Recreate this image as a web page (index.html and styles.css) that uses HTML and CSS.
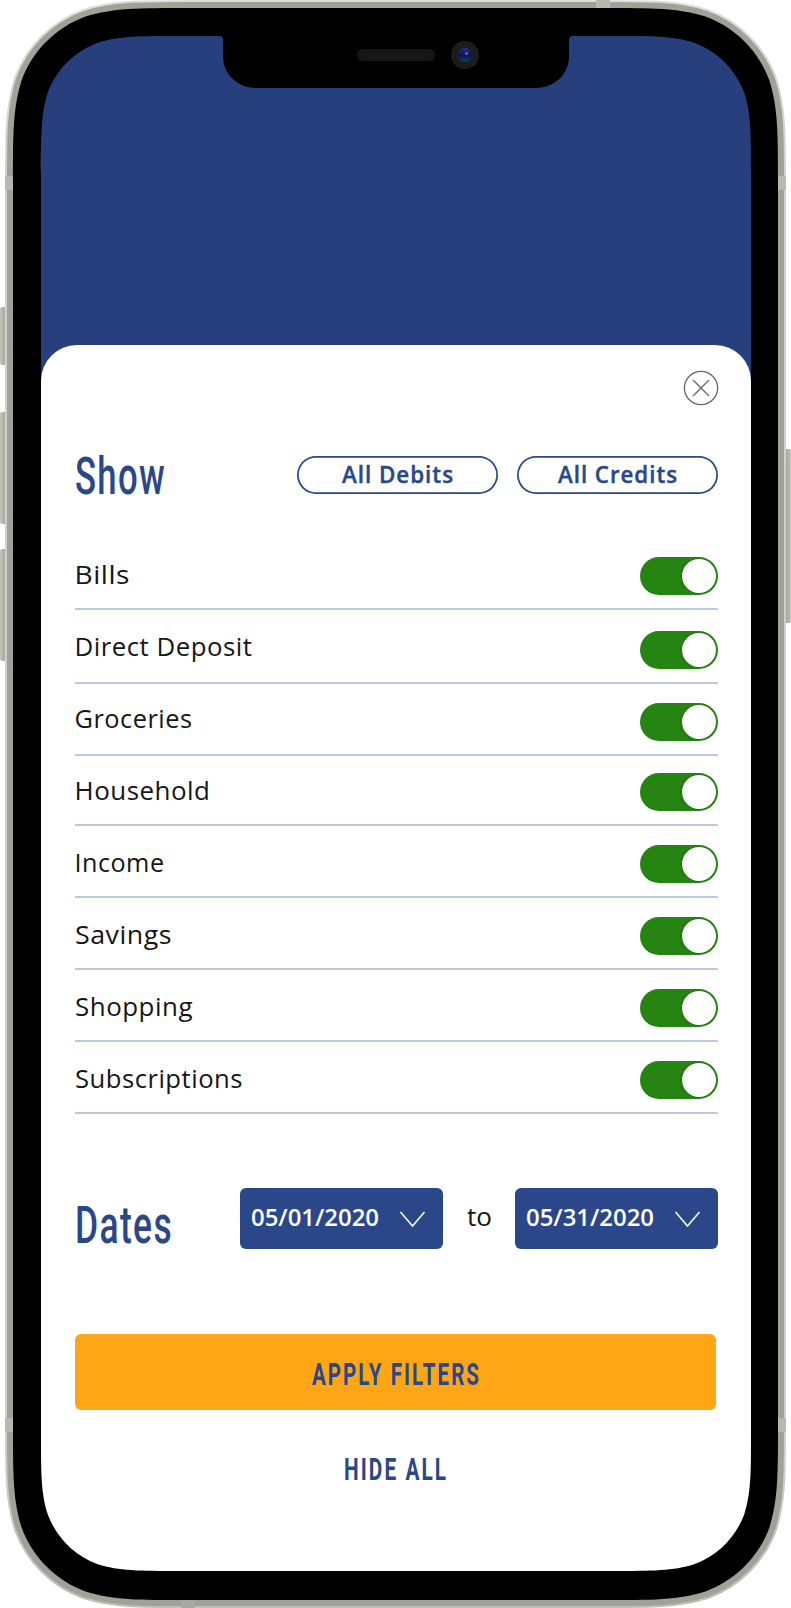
FILE: index.html
```html
<!DOCTYPE html>
<html lang="en">
<head>
<meta charset="utf-8">
<title>Transaction filters</title>
<link rel="stylesheet" href="styles.css">
</head>
<body>
<main class="device">
  <section class="screen">
    <div class="sheet">
      <div class="close-row">
        <svg class="close" viewBox="0 0 36 36" role="img" aria-label="Close"><circle cx="18" cy="18" r="16.6"/><path d="M10 10L26 26M26 10L10 26"/></svg>
      </div>
      <div class="show-row">
        <svg class="heading"><text x="0" y="38" textLength="91" lengthAdjust="spacingAndGlyphs">Show</text></svg>
        <div class="pills">
          <button class="pill"><svg><text x="45" y="26.500" textLength="112" lengthAdjust="spacingAndGlyphs">All Debits</text></svg></button>
          <button class="pill"><svg><text x="41" y="26.500" textLength="120" lengthAdjust="spacingAndGlyphs">All Credits</text></svg></button>
        </div>
      </div>
      <ul class="list">
        <li class="row"><svg class="label"><text x="-.5" y="46" textLength="55.500" lengthAdjust="spacingAndGlyphs">Bills</text></svg><span class="toggle"></span></li>
        <li class="row row-tall"><svg class="label"><text x="-.5" y="46" textLength="178" lengthAdjust="spacingAndGlyphs">Direct Deposit</text></svg><span class="toggle"></span></li>
        <li class="row"><svg class="label"><text x="-.5" y="44" textLength="118" lengthAdjust="spacingAndGlyphs">Groceries</text></svg><span class="toggle"></span></li>
        <li class="row row-short"><svg class="label"><text x="-.5" y="44" textLength="136" lengthAdjust="spacingAndGlyphs">Household</text></svg><span class="toggle"></span></li>
        <li class="row"><svg class="label"><text x="-.5" y="46" textLength="90" lengthAdjust="spacingAndGlyphs">Income</text></svg><span class="toggle"></span></li>
        <li class="row"><svg class="label"><text x="0" y="46" textLength="97" lengthAdjust="spacingAndGlyphs">Savings</text></svg><span class="toggle"></span></li>
        <li class="row"><svg class="label"><text x="0" y="46" textLength="118" lengthAdjust="spacingAndGlyphs">Shopping</text></svg><span class="toggle"></span></li>
        <li class="row"><svg class="label"><text x="0" y="46" textLength="168" lengthAdjust="spacingAndGlyphs">Subscriptions</text></svg><span class="toggle"></span></li>
      </ul>
      <div class="dates-row">
        <svg class="heading dates"><text x="0" y="54.500" textLength="98" lengthAdjust="spacingAndGlyphs">Dates</text></svg>
        <button class="date"><svg><text x="11" y="38" textLength="128" lengthAdjust="spacingAndGlyphs">05/01/2020</text><path d="M160.500 24L172.500 38L184.500 24"/></svg></button>
        <svg class="to"><text x="24" y="38" textLength="25" lengthAdjust="spacingAndGlyphs">to</text></svg>
        <button class="date"><svg><text x="11" y="38" textLength="128" lengthAdjust="spacingAndGlyphs">05/31/2020</text><path d="M160.500 24L172.500 38L184.500 24"/></svg></button>
      </div>
      <button class="action apply"><svg><text x="237" y="51" textLength="169" lengthAdjust="spacingAndGlyphs">APPLY FILTERS</text></svg></button>
      <button class="action hide"><svg><text x="269" y="51" textLength="104" lengthAdjust="spacingAndGlyphs">HIDE ALL</text></svg></button>
    </div>
  </section>
  <svg class="frame" viewBox="0 0 791 1608" aria-hidden="true">
    <defs>
      <linearGradient id="rim" x1="0" y1="0" x2="0" y2="1"><stop offset="0" stop-color="#dededc"/><stop offset=".1" stop-color="#d1d1cd"/><stop offset=".9" stop-color="#cfcfcb"/><stop offset="1" stop-color="#bfbfba"/></linearGradient>
      <linearGradient id="key" x1="0" y1="0" x2="1" y2="0"><stop offset="0" stop-color="#c3c4bc"/><stop offset=".5" stop-color="#aeb0a6"/><stop offset="1" stop-color="#96988d"/></linearGradient>
      <linearGradient id="key-r" x1="0" y1="0" x2="1" y2="0"><stop offset="0" stop-color="#96988d"/><stop offset=".5" stop-color="#aeb0a6"/><stop offset="1" stop-color="#c3c4bc"/></linearGradient>
      <linearGradient id="lens" x1="0" y1="0" x2="0" y2="1"><stop offset="0" stop-color="#2c2a9c"/><stop offset=".5" stop-color="#10104f"/><stop offset=".75" stop-color="#08305c"/><stop offset="1" stop-color="#064467"/></linearGradient>
      <path id="body" d="M13 183.800C13 133.200 13 107.900 21.600 80.600C32.400 50.900 55.900 27.400 85.600 16.600C112.900 8 138.200 8 188.800 8H602.200C652.800 8 678.100 8 705.400 16.600C735.100 27.400 758.600 50.900 769.400 80.600C778 107.900 778 133.200 778 183.800V1424.200C778 1474.800 778 1500.100 769.400 1527.400C758.600 1557.100 735.100 1580.600 705.400 1591.400C678.100 1600 652.800 1600 602.200 1600H188.800C138.200 1600 112.900 1600 85.600 1591.400C55.900 1580.600 32.400 1557.100 21.600 1527.400C13 1500.100 13 1474.800 13 1424.200Z"/>
    </defs>
    <g fill="url(#key)"><rect x="0" y="307" width="8" height="58" rx="2"/><rect x="0" y="412" width="8" height="112" rx="2"/><rect x="0" y="549" width="8" height="112" rx="2"/></g>
    <rect x="784" y="449" width="7" height="174" rx="2" fill="url(#key-r)"/>
    <use href="#body" fill="none" stroke="url(#rim)" stroke-width="16"/>
    <use href="#body" fill="none" stroke="#a0a298" stroke-width="12"/>
    <g fill="#b6b8b1"><rect x="5" y="176" width="8" height="14"/><rect x="778" y="176" width="8" height="14"/><rect x="596" y="0" width="14" height="8"/><rect x="5" y="1418" width="8" height="14"/><rect x="778" y="1418" width="8" height="14"/><rect x="181" y="1600" width="14" height="8" fill="#a7a9a1"/></g>
    <path fill-rule="evenodd" d="M13 183.800C13 133.200 13 107.900 21.600 80.600C32.400 50.900 55.900 27.400 85.600 16.600C112.900 8 138.200 8 188.800 8H602.200C652.800 8 678.100 8 705.400 16.600C735.100 27.400 758.600 50.900 769.400 80.600C778 107.900 778 133.200 778 183.800V1424.200C778 1474.800 778 1500.100 769.400 1527.400C758.600 1557.100 735.100 1580.600 705.400 1591.400C678.100 1600 652.800 1600 602.200 1600H188.800C138.200 1600 112.900 1600 85.600 1591.400C55.900 1580.600 32.400 1557.100 21.600 1527.400C13 1500.100 13 1474.800 13 1424.200ZM41 173.600C41 134 41 114.200 47.700 92.800C56.200 69.600 74.600 51.200 97.800 42.700C119.200 36 139 36 178.600 36H613.400C653 36 672.800 36 694.200 42.700C717.400 51.200 735.800 69.600 744.300 92.800C751 114.200 751 134 751 173.600V1433.400C751 1473 751 1492.800 744.300 1514.200C735.800 1537.400 717.400 1555.800 694.200 1564.300C672.800 1571 653 1571 613.400 1571H178.600C139 1571 119.200 1571 97.800 1564.300C74.600 1555.800 56.200 1537.400 47.700 1514.200C41 1492.800 41 1473 41 1433.400Z"/>
    <path d="M219 36Q223 36 223 40V56C223 75 238 88 257 88H535C554 88 569 75 569 56V40Q569 36 573 36V30H219Z"/>
    <rect x="357" y="49" width="78" height="12" rx="6" fill="#161616"/>
    <circle cx="465" cy="55" r="14" fill="#1c1c1d"/>
    <circle cx="465" cy="55" r="7" fill="url(#lens)"/>
    <circle cx="466.500" cy="53.500" r="1.800" fill="#5a50c4"/>
  </svg>
</main>
</body>
</html>
```
FILE: styles.css
```css
* { box-sizing: border-box; }
body { margin: 0; background: #fff; font-family: "Open Sans", "Noto Sans", sans-serif; }
svg { display: block; overflow: visible; }
button { display: block; padding: 0; border: 0; background: none; }
button svg { width: 100%; height: 100%; }

.device { position: relative; width: 791px; height: 1608px; padding: 36px 40px 37px 41px; overflow: hidden; }
.frame { position: absolute; inset: 0; width: 791px; height: 1608px; pointer-events: none; }
.screen { height: 1535px; padding-top: 308.5px; background: #273f7c; border-radius: 60px; overflow: hidden; }
.sheet { height: 1226.5px; padding: 25.500px 33px 0 34px; background: #fff; border-radius: 36px 36px 0 0; }

.close-row { display: flex; justify-content: flex-end; height: 86.400px; }
.close { width: 36px; height: 36px; margin-right: -1px; fill: none; stroke: #666; stroke-width: 1.3; }

.show-row { display: flex; justify-content: space-between; height: 81.600px; }
.heading { width: 110px; height: 60px; font: 500 51px Roboto, sans-serif; letter-spacing: 2px; fill: #2a478a; }
.pills { display: flex; gap: 19px; }
.pill { width: 201px; height: 38px; border-radius: 19px; box-shadow: inset 0 0 0 1.700px #2a478a; font: 600 22.500px "Open Sans", sans-serif; letter-spacing: 1px; fill: #2a478a; stroke: #2a478a; stroke-width: .4; }

.list { margin: 0; padding: 0; list-style: none; }
.row { display: flex; justify-content: space-between; align-items: flex-end; height: 72px; border-bottom: 2px solid #bcc9e2; }
.row-tall { height: 74px; }
.row-short { height: 70px; }
.label { width: 400px; height: 100%; font-size: 26.200px; letter-spacing: .5px; fill: #161616; }
.toggle { display: flex; justify-content: flex-end; width: 78px; height: 38px; margin-bottom: 13px; padding: 2px; border-radius: 19px; background: #268512; }
.toggle::before { content: ""; width: 34px; height: 34px; border-radius: 50%; background: #fff; box-shadow: -1px 0 3px rgba(0, 0, 0, .2); }

.dates-row { display: flex; margin-top: 74.500px; height: 61px; }
.dates { width: 165px; }
.date { width: 203px; height: 60.500px; border-radius: 6px; background: #2a478a; font: 600 22.500px "Open Sans", sans-serif; fill: #fff; }
.date path { fill: none; stroke: #fff; stroke-width: 1.500; }
.to { width: 72px; height: 61px; font-size: 25px; fill: #161616; }

.action { width: 641px; height: 76px; font: 700 30.500px Roboto, sans-serif; letter-spacing: 3px; fill: #2a478a; }
.apply { margin-top: 84.500px; border-radius: 6px; background: #ffa616; }
.hide { margin-top: 19px; }
```
